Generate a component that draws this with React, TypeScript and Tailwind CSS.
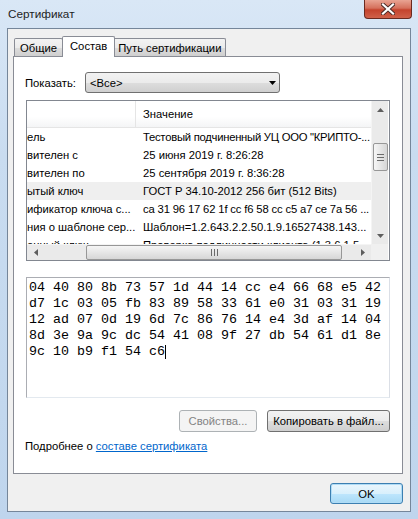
import React from 'react'

const rows = [
  { name: 'ель', value: 'Тестовый подчиненный УЦ ООО "КРИПТО-...', fit: 'tracking-[-0.25px]' },
  { name: 'вителен с', value: '25 июня 2019 г. 8:26:28' },
  { name: 'вителен по', value: '25 сентября 2019 г. 8:36:28' },
  { name: 'ытый ключ', value: 'ГОСТ Р 34.10-2012 256 бит (512 Bits)', selected: true },
  { name: 'ификатор ключа с...', value: 'ca 31 96 17 62 1f cc f6 58 cc c5 a7 ce 7a 56 ...', fit: 'tracking-[-0.15px]' },
  { name: 'ния о шаблоне сер...', value: 'Шаблон=1.2.643.2.2.50.1.9.16527438.143...' },
  { name: 'енный ключ', value: 'Проверка подлинности клиента (1.3.6.1.5...' },
]

const hexLines = [
  '04 40 80 8b 73 57 1d 44 14 cc e4 66 68 e5 42',
  'd7 1c 03 05 fb 83 89 58 33 61 e0 31 03 31 19',
  '12 ad 07 0d 19 6d 7c 86 76 14 e4 3d af 14 04',
  '8d 3e 9a 9c dc 54 41 08 9f 27 db 54 61 d1 8e',
  '9c 10 b9 f1 54 c6',
]

function Arrow({ dir }: { dir: 'up' | 'down' | 'left' | 'right' }) {
  const pts = {
    up: '0,4 7,4 3.5,0',
    down: '0,0 7,0 3.5,4',
    left: '4,0 4,7 0,3.5',
    right: '0,0 0,7 4,3.5',
  }[dir]
  const vertical = dir === 'up' || dir === 'down'
  return (
    <svg width={vertical ? 7 : 4} height={vertical ? 4 : 7} viewBox={vertical ? '0 0 7 4' : '0 0 4 7'}>
      <polygon points={pts} fill="#5e5e5e" />
    </svg>
  )
}

function Tab({ label, active }: { label: string; active?: boolean }) {
  if (active) {
    return (
      <div className="relative z-10 -mb-px h-[21px] pl-[7px] pr-[7px] flex items-start pt-[1px] bg-white border border-b-0 border-[#898c95] rounded-t-[2px] -mx-[1px] whitespace-nowrap">
        {label}
      </div>
    )
  }
  return (
    <div className="h-[18px] px-[4px] flex items-center bg-[linear-gradient(180deg,#f3f3f3_0%,#ebebeb_50%,#dddddd_51%,#cfcfcf_100%)] border border-b-0 border-[#898c95] rounded-t-[2px] -ml-px first:ml-0 first:px-[5px] whitespace-nowrap">
      {label}
    </div>
  )
}

export default function App() {
  return (
    <div className="w-[418px] h-[519px] flex flex-col overflow-hidden bg-[linear-gradient(180deg,#d9e7f6_0%,#c9dcf0_30%,#bfd5ed_100%)] font-['Liberation_Sans','Noto_Sans',sans-serif] text-[11.25px] leading-[16px] text-black">
      {/* title bar */}
      <div className="h-[28px] flex items-start justify-between shrink-0">
        <div className="pl-[8px] pt-[6px] text-[11.75px] text-[#1e1e1e]">Сертификат</div>
        <div className="mr-[6px] w-[48px] h-[19px] rounded-b-[4px] border border-t-0 border-[#6a2a20] bg-[linear-gradient(180deg,#e9a493_0%,#d5705c_45%,#c4432d_55%,#d0614a_100%)] flex items-center justify-center">
          <svg width="14" height="12" viewBox="0 0 14 12">
            <path d="M2 1.5 L12 10.5 M12 1.5 L2 10.5" stroke="#4b2a26" strokeWidth="4" strokeLinecap="square" />
            <path d="M2 1.5 L12 10.5 M12 1.5 L2 10.5" stroke="#ffffff" strokeWidth="2.2" strokeLinecap="square" />
          </svg>
        </div>
      </div>

      {/* client area */}
      <div className="mx-[7px] mb-[7px] flex-1 border border-[#75869a] bg-[#f0f0f0] flex flex-col">
        {/* tabs */}
        <div className="pt-[7px] pl-[6px] flex items-end">
          <Tab label="Общие" />
          <Tab label="Состав" active />
          <Tab label="Путь сертификации" />
        </div>

        {/* tab panel */}
        <div className="ml-[5px] mr-[7px] w-[390px] h-[418px] border border-[#898c95] bg-white flex flex-col">
          <div className="mt-[15px] pl-[11px] flex items-center">
            <div className="w-[60px]">Показать:</div>
            <div className="w-[195px] h-[21px] rounded-[3px] border border-[#707070] bg-[linear-gradient(180deg,#f2f2f2_0%,#ebebeb_50%,#dddddd_51%,#cfcfcf_100%)] flex items-center justify-between pl-[4px] pr-[3px]">
              <span>&lt;Все&gt;</span>
              <svg width="7" height="4" viewBox="0 0 7 4">
                <polygon points="0,0 7,0 3.5,4" fill="#000" />
              </svg>
            </div>
          </div>

          {/* list view */}
          <div className="mt-[7px] ml-[12px] w-[364px] h-[161px] border border-[#828790] flex flex-col">
            <div className="flex h-[143px]">
              <div className="w-[344px] overflow-hidden">
                <div className="flex h-[27px] items-center bg-[linear-gradient(180deg,#ffffff_0%,#ffffff_60%,#f4f5f6_100%)] border-b border-[#e5e5e5]">
                  <div className="w-[109px] h-full shrink-0 border-r border-[#e5e5e5]" />
                  <div className="pl-[7px] whitespace-nowrap">Значение</div>
                </div>
                {rows.map((r) => (
                  <div key={r.name} className={`flex h-[18px] items-center whitespace-nowrap ${r.selected ? 'bg-[#efefef]' : ''}`}>
                    <div className="w-[109px] shrink-0">{r.name}</div>
                    <div className={`pl-[7px] ${r.fit ?? ''}`}>{r.value}</div>
                  </div>
                ))}
              </div>
              {/* vertical scrollbar */}
              <div className="w-[17px] bg-[#eaeaea] border-l border-[#f4f4f4] flex flex-col items-center">
                <div className="h-[17px] w-full flex items-center justify-center">
                  <Arrow dir="up" />
                </div>
                <div className="mt-[25px] w-[15px] h-[28px] rounded-[2px] border border-[#979797] bg-[linear-gradient(90deg,#f6f6f6_0%,#e6e6e6_50%,#d6d6d6_100%)] flex flex-col items-center justify-center gap-[2px]">
                  <div className="w-[7px] h-px bg-[#6b6b6b]" />
                  <div className="w-[7px] h-px bg-[#6b6b6b]" />
                  <div className="w-[7px] h-px bg-[#6b6b6b]" />
                </div>
                <div className="flex-1" />
                <div className="h-[17px] w-full flex items-center justify-center">
                  <Arrow dir="down" />
                </div>
              </div>
            </div>
            {/* horizontal scrollbar */}
            <div className="flex h-[17px]">
              <div className="w-[344px] bg-[#eaeaea] border-t border-[#f4f4f4] flex items-center">
                <div className="w-[17px] h-full flex items-center justify-center">
                  <Arrow dir="left" />
                </div>
                <div className="ml-[42px] h-[15px] w-[256px] rounded-[2px] border border-[#979797] bg-[linear-gradient(180deg,#f6f6f6_0%,#e6e6e6_50%,#d6d6d6_100%)] flex items-center justify-center gap-[2px]">
                  <div className="w-px h-[7px] bg-[#6b6b6b]" />
                  <div className="w-px h-[7px] bg-[#6b6b6b]" />
                  <div className="w-px h-[7px] bg-[#6b6b6b]" />
                </div>
                <div className="flex-1" />
                <div className="w-[17px] h-full flex items-center justify-center">
                  <Arrow dir="right" />
                </div>
              </div>
              <div className="w-[17px] bg-[#f0f0f0]" />
            </div>
          </div>

          {/* hex value */}
          <div className="mt-[16px] ml-[12px] w-[364px] h-[121px] border border-[#abadb3] border-r-[#dbdfe6] border-b-[#e3e9ef] pl-[2px] pt-[2px] font-['Liberation_Mono','Courier_New',monospace] text-[13.33px] leading-[16px] whitespace-pre">
            {hexLines.map((l, i) => (
              <div key={i} className="flex items-center">
                {l}
                {i === hexLines.length - 1 && <span className="inline-block w-px h-[14px] bg-black" />}
              </div>
            ))}
          </div>

          {/* buttons */}
          <div className="mt-[12px] ml-[12px] w-[364px] flex justify-end gap-[10px]">
            <div className="w-[78px] h-[22px] rounded-[3px] border border-[#adb2b5] bg-[#f4f4f4] text-[#838383] flex items-center justify-center whitespace-nowrap">
              Свойства...
            </div>
            <div className="w-[123px] h-[22px] rounded-[3px] border border-[#707070] bg-[linear-gradient(180deg,#f2f2f2_0%,#ebebeb_50%,#dddddd_51%,#cfcfcf_100%)] flex items-center justify-center whitespace-nowrap">
              Копировать в файл...
            </div>
          </div>

          <div className="mt-[6px] ml-[11px]">
            Подробнее о <span className="text-[#0066cc] underline">составе сертификата </span>
          </div>
        </div>

        {/* OK */}
        <div className="mt-[9px] mr-[7px] flex justify-end">
          <div className="w-[73px] h-[21px] rounded-[3px] border border-[#3c7fb1] shadow-[inset_0_0_0_1px_#b0dcf6] bg-[linear-gradient(180deg,#eaf6fd_0%,#d9f0fc_50%,#bee6fd_51%,#a7d9f5_100%)] flex items-center justify-center">
            OK
          </div>
        </div>
      </div>
    </div>
  )
}
